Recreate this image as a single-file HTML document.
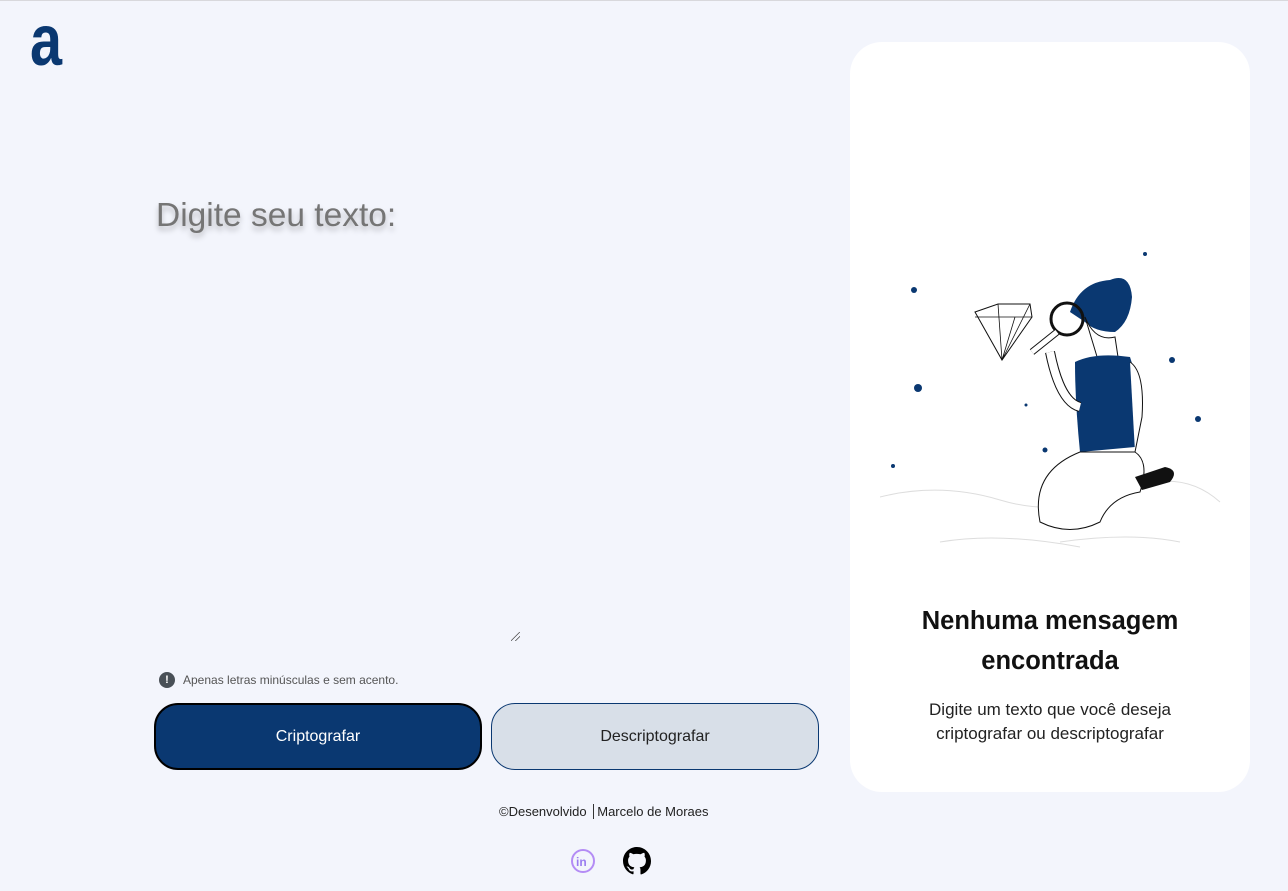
<!DOCTYPE html>
<html><head><meta charset="utf-8"><style>
*{margin:0;padding:0;box-sizing:border-box}
body{width:1288px;height:891px;background:#f3f5fc;font-family:"Liberation Sans",sans-serif;position:relative;overflow:hidden;border-top:1px solid #d8d8dc}
.logo{position:absolute;left:30px;top:4px;font-size:72px;color:#0a3871;font-weight:bold;line-height:1;font-family:"Liberation Sans",sans-serif;transform:scaleX(.8);transform-origin:left}
.title{position:absolute;left:156px;top:196px;font-size:33.5px;color:#757575;text-shadow:0 4px 6px rgba(0,0,0,.25)}
.resize{position:absolute;left:511px;top:631px;width:9px;height:9px;background:linear-gradient(135deg,transparent 45%,#555 46%,#555 52%,transparent 53%,transparent 70%,#555 71%,#555 77%,transparent 78%)}
.hint{position:absolute;left:159px;top:671px;font-size:12px;color:#555;display:flex;align-items:center;gap:8px}
.hint i{width:16px;height:16px;border-radius:50%;background:#495057;color:#fff;font-style:normal;font-weight:bold;font-size:11px;text-align:center;line-height:16px}
.btn{position:absolute;top:702px;width:328px;height:67px;border-radius:24px;font-size:16px;display:flex;align-items:center;justify-content:center}
.b1{left:154px;background:#0a3871;color:#fff;border:2px solid #000}
.b2{left:491px;background:#d8dfe8;border:1px solid #0a3871;color:#222}
.foot{position:absolute;left:499px;top:803px;font-size:13px;color:#222}
.card{position:absolute;left:850px;top:41px;width:400px;height:750px;background:#fff;border-radius:32px}
.card h2{position:absolute;top:559px;width:100%;text-align:center;font-size:25.5px;font-weight:bold;line-height:40px;color:#111}
.card p{position:absolute;top:656px;width:100%;text-align:center;font-size:17px;line-height:24px;color:#222}
</style></head><body>
<div class="logo">a</div>
<div class="title">Digite seu texto:</div>
<div class="resize"></div>
<div class="hint"><i>!</i>Apenas letras minúsculas e sem acento.</div>
<div class="btn b1">Criptografar</div>
<div class="btn b2">Descriptografar</div>
<div class="foot">©Desenvolvido <span style="border-left:1px solid #333;margin:0 3px"></span> Marcelo de Moraes</div>
<svg style="position:absolute;left:570px;top:847px" width="26" height="26"><circle cx="13" cy="13" r="11" fill="none" stroke="#b48cf5" stroke-width="2"/><text x="6" y="18" font-size="12" font-weight="bold" fill="#9a7cf0" font-family="Liberation Sans">in</text></svg>
<svg style="position:absolute;left:623px;top:846px" width="28" height="28" viewBox="0 0 16 16"><path fill="#000" d="M8 0C3.58 0 0 3.580 0 8c0 3.54 2.29 6.53 5.47 7.590.4.07.55-.17.55-.38v-1.33c-2.23.48-2.700-1.07-2.700-1.07-.36-.92-.89-1.170-.89-1.170-.73-.5.05-.49.05-.49.8.06 1.23.83 1.23.83.72 1.22 1.87.87 2.33.66.07-.52.28-.87.5-1.070-1.78-.2-3.640-.89-3.640-3.95 0-.87.31-1.59.82-2.15-.08-.2-.36-1.02.08-2.12 0 0 .67-.21 2.2.82.64-.18 1.32-.27 2-.27s1.36.09 2 .27c1.53-1.04 2.2-.82 2.2-.82.44 1.1.16 1.92.08 2.12.51.56.82 1.27.82 2.15 0 3.07-1.87 3.75-3.65 3.95.29.25.54.73.54 1.48v2.2c0 .21.15.46.55.38A8.01 8.01 0 0016 8c0-4.42-3.58-8-8-8z"/></svg>
<div class="card">
<svg style="position:absolute;left:30px;top:200px" width="345" height="320">
<g fill="#0a3871"><circle cx="34" cy="48" r="3"/><circle cx="38" cy="146" r="4"/><circle cx="13" cy="224" r="2"/><circle cx="265" cy="12" r="2"/><circle cx="292" cy="118" r="3"/><circle cx="318" cy="177" r="3"/><circle cx="146" cy="163" r="1.5"/><circle cx="165" cy="208" r="2.5"/></g>
<g fill="none" stroke="#ddd"><path d="M0 255 Q60 240 120 258 T240 250 T340 260"/><path d="M60 300 Q120 290 200 305"/><path d="M180 300 Q250 290 300 300"/></g>
<path d="M95 70 L118 62 L150 62 L152 75 L122 118 Z" fill="#fff" stroke="#111"/>
<path d="M95 75 L152 75 M118 62 L122 118 L135 75 M150 62 L122 118" fill="none" stroke="#111" stroke-width=".8"/>
<path d="M190 70 Q200 40 230 38 Q250 30 252 55 Q250 80 235 90 Q215 90 205 80 Z" fill="#0a3871"/>
<path d="M205 75 Q215 100 235 95 L238 115 L218 118 Z" fill="#fff" stroke="#111"/>
<path d="M195 120 Q215 110 250 115 Q262 150 255 205 L200 210 Q195 160 195 120 Z" fill="#0a3871"/>
<path d="M250 120 Q265 130 262 175 L255 210" fill="#fff" stroke="#111"/>
<path d="M170 110 Q180 160 200 165" fill="none" stroke="#111" stroke-width="10"/>
<path d="M170 110 Q180 160 200 165" fill="none" stroke="#fff" stroke-width="8"/>
<path d="M200 210 Q150 230 160 280 Q190 295 220 280 Q230 255 260 250 Q270 220 255 210 Z" fill="#fff" stroke="#111"/>
<path d="M255 235 L285 225 Q300 228 290 240 L262 248 Z" fill="#111"/>
<circle cx="187" cy="77" r="16" fill="none" stroke="#111" stroke-width="3"/>
<path d="M177 90 L152 110" stroke="#111" stroke-width="7"/><path d="M177 90 L152 110" stroke="#fff" stroke-width="5"/>
</svg>
<h2>Nenhuma mensagem<br>encontrada</h2>
<p>Digite um texto que você deseja<br>criptografar ou descriptografar</p>
</div>
</body></html>
